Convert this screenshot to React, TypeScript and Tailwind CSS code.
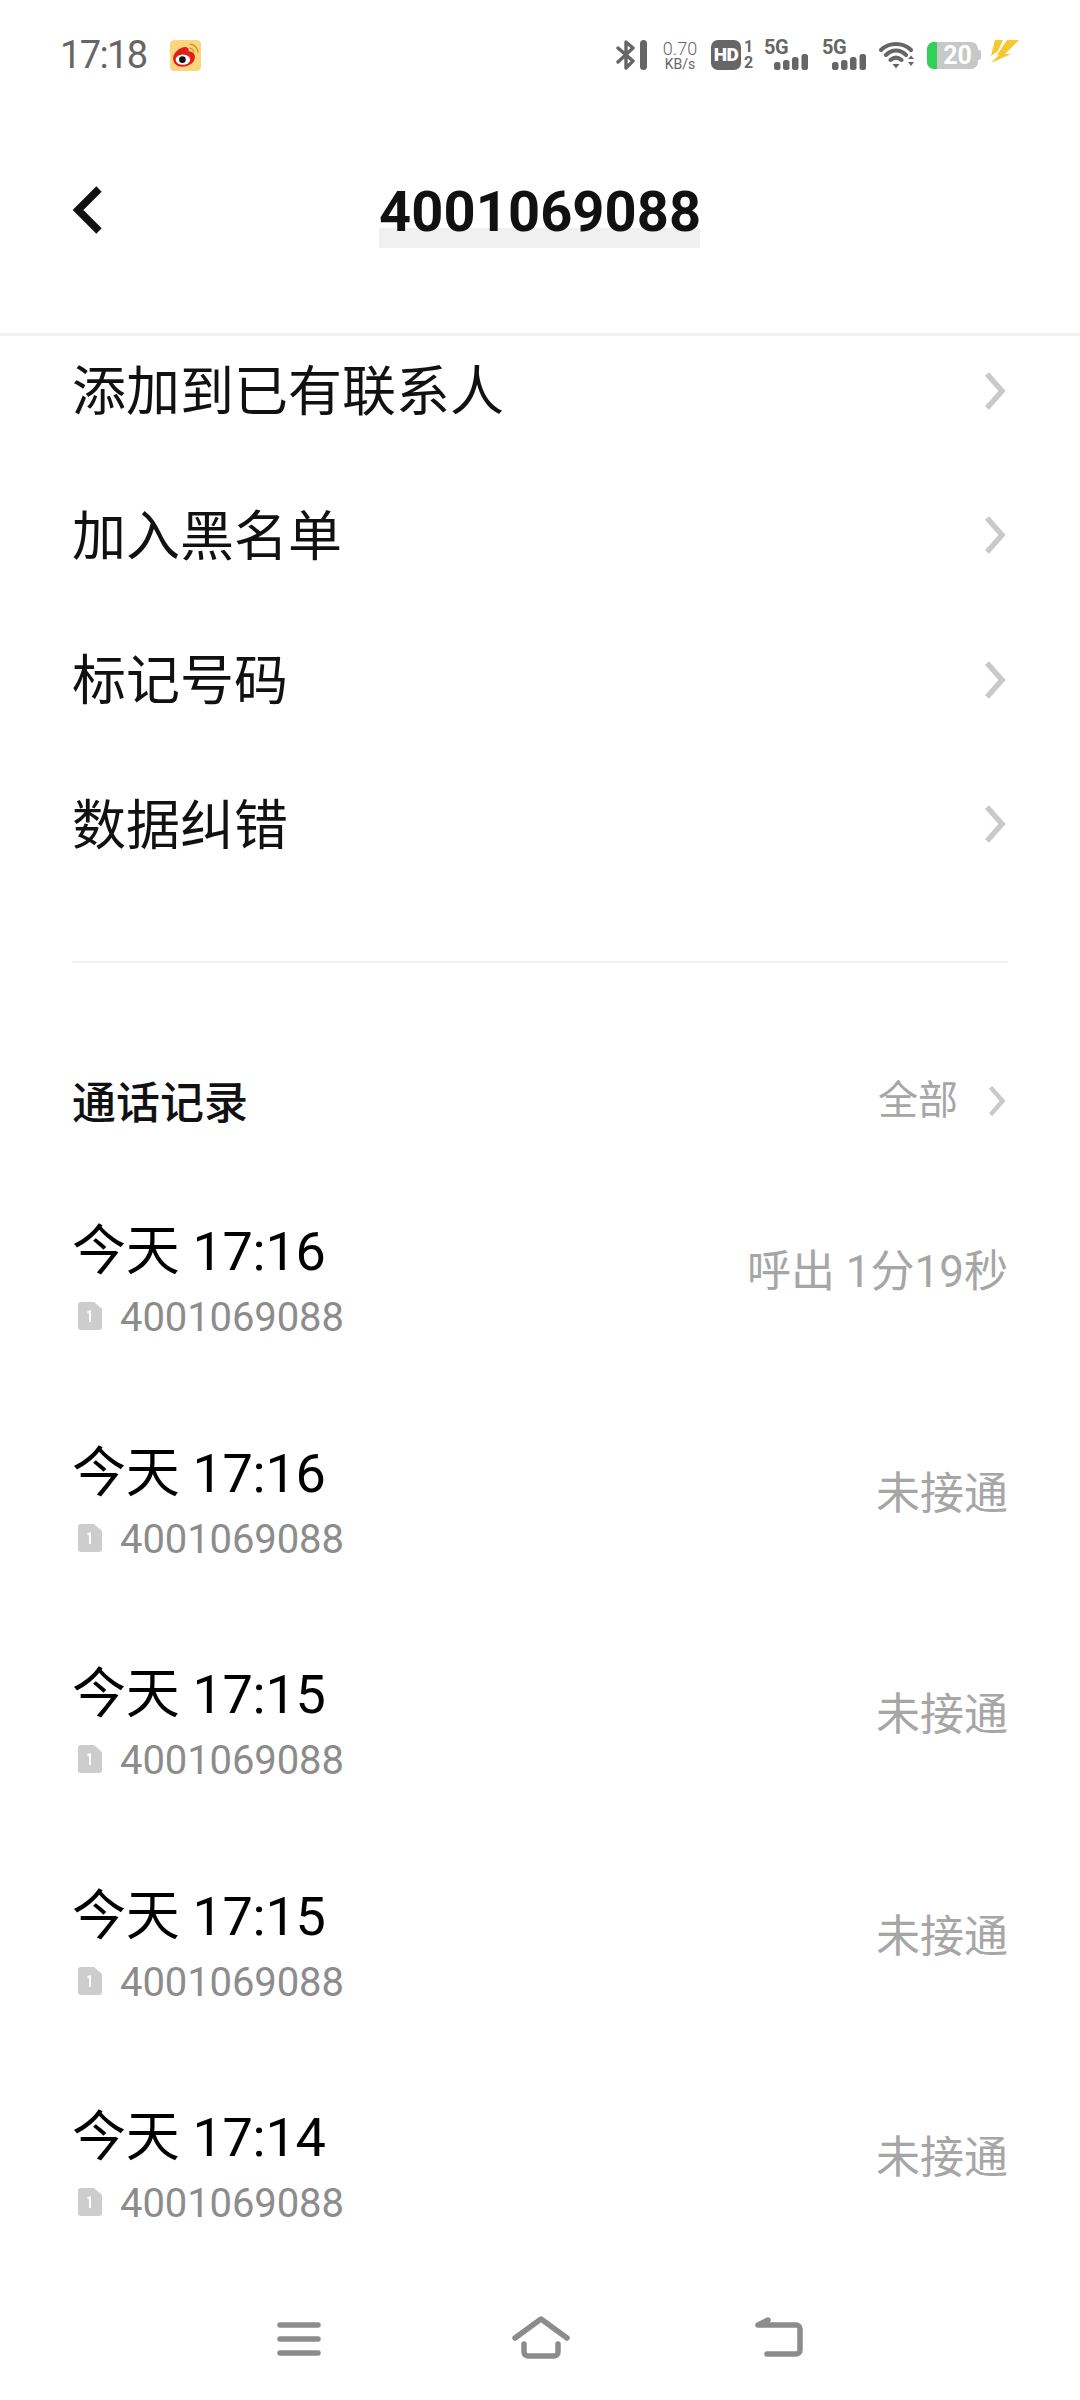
import React from "react";

const cjk = "font-['Roboto','Noto_Sans_CJK_SC',sans-serif]";

const Chevron: React.FC<{ size?: string }> = ({ size = "w-[22px] h-[40px]" }) => (
  <svg viewBox="0 0 22 40" className={size} fill="none">
    <path d="M3 3 L18 20 L3 37" stroke="#c9c9c9" strokeWidth="5.5" />
  </svg>
);

const SimIcon: React.FC = () => (
  <svg viewBox="0 0 24 28" className="w-[24px] h-[28px] mt-[-4px]">
    <path
      d="M3 0 H16 L24 7 V25 a3 3 0 0 1 -3 3 H3 a3 3 0 0 1 -3 -3 V3 a3 3 0 0 1 3 -3 Z"
      fill="#cdcdcd"
    />
    <path d="M9.5 9 L13 8 V20 H11 V11 L9.5 11.5 Z" fill="#fff" />
  </svg>
);

const Signal: React.FC = () => (
  <div className="flex flex-col w-[44px] h-[30px]">
    <div className="text-[20px] leading-[14px] font-bold text-[#666] tracking-[-0.5px]">5G</div>
    <svg viewBox="0 0 34 16" className="w-[34px] h-[16px] ml-[10px]">
      <rect x="0" y="8" width="6.5" height="8" rx="2.5" fill="#666" />
      <rect x="9" y="6" width="6.5" height="10" rx="2.5" fill="#666" />
      <rect x="18" y="3" width="6.5" height="13" rx="2.5" fill="#666" />
      <rect x="27.5" y="0" width="6.5" height="16" rx="2.5" fill="#666" />
    </svg>
  </div>
);

const StatusBar: React.FC = () => (
  <div className="h-[110px] flex items-center justify-between pl-[60px] pr-[60px]">
    <div className="flex items-center">
      <span className="text-[38px] leading-none text-[#666] w-[110px] tracking-[-1.6px]">17:18</span>
      <svg viewBox="0 0 30 30" className="w-[31px] h-[31px]">
        <rect width="30" height="30" rx="4" fill="#fbd67e" />
        <path
          d="M3 18 C3 12 11 6 16 7 C19 8 18 10 18 11 C22 11 25 14 24 18 C23 23 17 26 12 26 C7 26 3 23 3 18 Z"
          fill="#e0201c"
        />
        <ellipse cx="12.5" cy="19" rx="7" ry="5" fill="#fff" />
        <circle cx="12" cy="19" r="3.2" fill="#111" />
        <path d="M19 4 A8 8 0 0 1 27 12 M19 8 A4 4 0 0 1 23 12" stroke="#d99a2b" strokeWidth="1.6" fill="none" />
      </svg>
    </div>
    <div className="flex items-center">
      <svg viewBox="0 0 31 30" className="w-[31px] h-[30px] mr-[15px]">
        <path d="M2 8 L17 21 L10 28 V2 L17 8 L2 22" stroke="#666" strokeWidth="3.4" fill="none" strokeLinejoin="round" strokeLinecap="round" />
        <rect x="24" y="0" width="7" height="30" rx="3.5" fill="#666" />
      </svg>
      <div className="flex flex-col items-center w-[36px] mr-[13px] text-[#666]">
        <span className="text-[18px] leading-[18px] font-light">0.70</span>
        <span className="text-[14px] leading-[12px]">KB/s</span>
      </div>
      <div className="w-[30px] h-[30px] rounded-[7px] bg-[#666] text-white text-[19px] font-black flex items-center justify-center mr-[3px] tracking-[-0.5px]">
        HD
      </div>
      <div className="flex flex-col items-center w-[9px] mr-[11px] text-[#666] text-[16px] font-bold leading-[16px]">
        <span>1</span>
        <span>2</span>
      </div>
      <div className="mr-[14px]">
        <Signal />
      </div>
      <div className="mr-[13px]">
        <Signal />
      </div>
      <svg viewBox="0 0 36 28" className="w-[36px] h-[28px] mr-[12px]">
        <path d="M2 9 C10 1 24 1 32 9 M7 14 C13 8 21 8 27 14 M11.5 19 C15 16 19 16 22.5 19" stroke="#666" strokeWidth="4" fill="none" strokeLinecap="round" />
        <path d="M13.5 23 L20.5 23 L17 27.5 Z" fill="#666" />
        <path d="M29 18 L32 14.5 L35 18 Z M29 21 L32 25 L35 21 Z" fill="#666" />
      </svg>
      <div className="flex items-center mr-[9px]">
        <div className="w-[51px] h-[27px] rounded-[7px] overflow-hidden flex bg-[#c8c8c8]">
          <div className="w-[10px] bg-[#2fd158]" />
          <div className="flex-1 text-white text-[25px] font-bold leading-[27px] text-center">20</div>
        </div>
        <div className="w-[3px] h-[10px] bg-[#c8c8c8] rounded-r-[2px]" />
      </div>
      <svg viewBox="0 0 30 24" className="w-[30px] h-[24px] mt-[-6px]">
        <path d="M5 0 H13 L8 11 L1 16 Z M17 0 H29 L15 14 H21 L1 23 L9 15 H7 Z" fill="#f5c832" />
      </svg>
    </div>
  </div>
);

const MenuRow: React.FC<{ label: string }> = ({ label }) => (
  <div className="h-[144.5px] flex items-center justify-between pl-[72px] pr-[74px]">
    <span className="text-[54px] leading-none text-[#111]">{label}</span>
    <div className="mt-[-5px]">
      <Chevron />
    </div>
  </div>
);

const CallRow: React.FC<{ time: string; right: string }> = ({ time, right }) => (
  <div className="h-[221.6px] flex justify-between pl-[72px] pr-[72px]">
    <div className="flex flex-col">
      <div className="text-[54px] leading-[64px] text-black tracking-[-0.3px]">今天 {time}</div>
      <div className="flex items-center mt-[10px]">
        <div className="ml-[6px] mr-[18px]">
          <SimIcon />
        </div>
        <span className="text-[40px] leading-[48px] text-[#8c8c8c] tracking-[-0.1px]">4001069088</span>
      </div>
    </div>
    <div className="text-[44px] leading-[50px] text-[#a6a6a6] mt-[27px]">{right}</div>
  </div>
);

const calls = [
  { time: "17:16", right: "呼出 1分19秒" },
  { time: "17:16", right: "未接通" },
  { time: "17:15", right: "未接通" },
  { time: "17:15", right: "未接通" },
  { time: "17:14", right: "未接通" },
];

export default function App() {
  return (
    <div className={`relative w-[1080px] h-[2400px] bg-white flex flex-col overflow-hidden ${cjk}`}>
      <StatusBar />

      <div className="h-[226px] flex items-start pl-[72px] relative border-b-[3px] border-[#f1f1f1] shrink-0">
        <svg viewBox="0 0 30 48" className="w-[30px] h-[48px] mt-[76px]">
          <path d="M27 3 L6 24 L27 45" stroke="#111" strokeWidth="7.5" fill="none" />
        </svg>
        <div className="absolute left-[379px] top-[70px] w-[321px]">
          <div className="absolute left-0 top-[48px] w-full h-[20px] bg-[#f0f0f0]" />
          <span className="relative block text-[56px] leading-[64px] font-bold tracking-[0.1px] text-[#111]">4001069088</span>
        </div>
      </div>

      <div className="mt-[-15px]">
        <MenuRow label="添加到已有联系人" />
        <MenuRow label="加入黑名单" />
        <MenuRow label="标记号码" />
        <MenuRow label="数据纠错" />
      </div>

      <div className="h-[2px] bg-[#efefef] ml-[72px] mr-[72px] mt-[62px]" />

      <div className="flex items-center justify-between pl-[72px] pr-[74px] mt-[111px] h-[60px]">
        <span className="text-[44px] font-medium text-[#111]">通话记录</span>
        <div className="flex items-center mt-[-6px]">
          <span className="text-[40px] text-[#a6a6a6] mr-[30px]">全部</span>
          <Chevron size="w-[18px] h-[32px]" />
        </div>
      </div>

      <div className="mt-[86px]">
        {calls.map((c, i) => (
          <CallRow key={i} time={c.time} right={c.right} />
        ))}
      </div>

      <div className="absolute left-0 bottom-0 w-full h-[100px] flex items-start bg-white pl-[277px] pt-[20px]">
        <svg viewBox="0 0 44 38" className="w-[44px] h-[38px] mr-[190px]">
          <path d="M3 5 H41 M3 19 H41 M3 33 H41" stroke="#8c8c8c" strokeWidth="5.5" strokeLinecap="round" />
        </svg>
        <svg viewBox="0 0 60 44" className="w-[60px] h-[44px] mr-[183px] mt-[-4px]">
          <path d="M4 22 L30 3 L56 22" stroke="#8c8c8c" strokeWidth="5.5" fill="none" strokeLinecap="round" strokeLinejoin="round" />
          <path d="M13 28 V36 a4 4 0 0 0 4 4 H43 a4 4 0 0 0 4 -4 V28" stroke="#8c8c8c" strokeWidth="5.5" fill="none" strokeLinecap="round" />
        </svg>
        <svg viewBox="0 0 50 42" className="w-[50px] h-[42px] mt-[-4px]">
          <path d="M4 9 L14 4 M4 9 H42 a4 4 0 0 1 4 4 V34 a4 4 0 0 1 -4 4 H13" stroke="#8c8c8c" strokeWidth="5.5" fill="none" strokeLinecap="round" strokeLinejoin="round" />
        </svg>
      </div>
    </div>
  );
}
